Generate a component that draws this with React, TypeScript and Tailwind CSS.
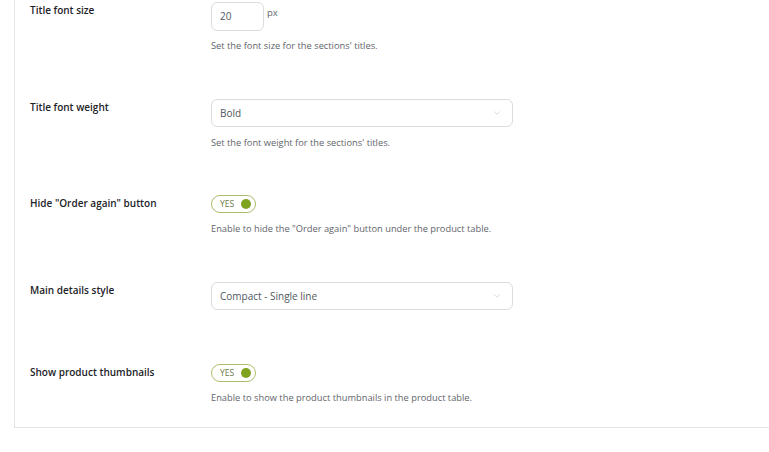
import { ChevronDown } from "lucide-react";

const font = { fontFamily: '"Open Sans", "Noto Sans", Arial, sans-serif' };

function Label({ children }: { children: React.ReactNode }) {
  return (
    <div className="w-[181px] shrink-0 pt-[1px] text-[10px] leading-[14px] font-semibold text-[#1d2327]">
      {children}
    </div>
  );
}

function Desc({ children }: { children: React.ReactNode }) {
  return <p className="text-[9.3px] leading-[12px] text-[#5f656b]">{children}</p>;
}

function Select({ value }: { value: string }) {
  return (
    <div className="flex h-[28px] w-[302px] items-center justify-between rounded-[6px] border border-[#dcdcde] bg-white pl-[8px] pr-[10px]">
      <span className="text-[10px] text-[#50575e]">{value}</span>
      <ChevronDown className="h-[10px] w-[10px] text-[#c3c4c7]" strokeWidth={1.5} />
    </div>
  );
}

function Toggle() {
  return (
    <div className="flex h-[18px] w-[45px] items-center justify-between rounded-full border border-[#a9be6a] pl-[8px] pr-[4px]">
      <span className="text-[8.5px] text-[#6b7a45]">YES</span>
      <span className="h-[10px] w-[10px] rounded-full bg-[#7fa31f]" />
    </div>
  );
}

export default function App() {
  return (
    <div className="h-[452px] w-full overflow-hidden bg-white" style={font}>
      <div className="ml-[14px] border-b border-l border-[#e5e5e5] pl-[15px] pt-[2px] pb-[23px]">
        {/* Title font size */}
        <div className="flex items-start">
          <Label>Title font size</Label>
          <div>
            <div className="flex items-start gap-[3px]">
              <div className="flex h-[29px] w-[53px] items-center rounded-[6px] border border-[#dcdcde] pl-[8px] text-[10px] text-[#50575e]">
                20
              </div>
              <span className="pt-[5px] text-[9.5px] leading-[12px] text-[#5f656b]">px</span>
            </div>
            <div className="mt-[9px]">
              <Desc>Set the font size for the sections' titles.</Desc>
            </div>
          </div>
        </div>

        {/* Title font weight */}
        <div className="mt-[47px] flex items-start">
          <Label>Title font weight</Label>
          <div>
            <Select value="Bold" />
            <div className="mt-[10px]">
              <Desc>Set the font weight for the sections' titles.</Desc>
            </div>
          </div>
        </div>

        {/* Hide order again */}
        <div className="mt-[46px] flex items-start">
          <Label>Hide "Order again" button</Label>
          <div>
            <Toggle />
            <div className="mt-[10px]">
              <Desc>Enable to hide the "Order again" button under the product table.</Desc>
            </div>
          </div>
        </div>

        {/* Main details style */}
        <div className="mt-[47px] flex items-start">
          <Label>Main details style</Label>
          <Select value="Compact - Single line" />
        </div>

        {/* Show product thumbnails */}
        <div className="mt-[54px] flex items-start">
          <Label>Show product thumbnails</Label>
          <div>
            <Toggle />
            <div className="mt-[10px]">
              <Desc>Enable to show the product thumbnails in the product table.</Desc>
            </div>
          </div>
        </div>
      </div>
    </div>
  );
}
